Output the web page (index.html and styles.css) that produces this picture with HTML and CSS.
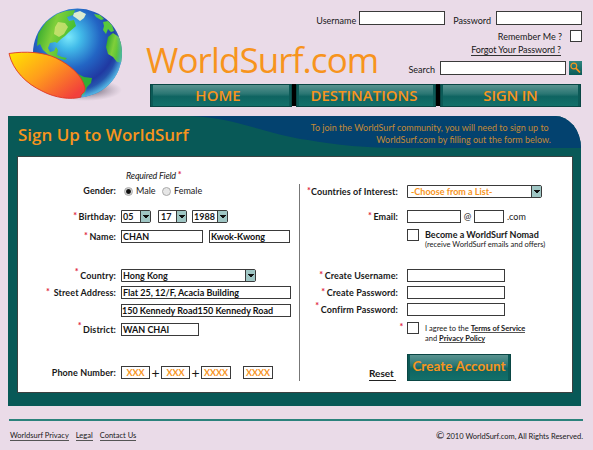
FILE: index.html
```html
<!DOCTYPE html>
<html lang="en">
<head>
<meta charset="utf-8">
<title>WorldSurf.com</title>
<link rel="stylesheet" href="styles.css">
</head>
<body>
<header class="header">
  <svg class="globe" viewBox="0 0 142 108" width="142" height="108" aria-hidden="true">
    <defs>
      <radialGradient id="sea" cx="0.4" cy="0.32" r="0.68">
        <stop offset="0" stop-color="#7be9fb"/><stop offset="0.2" stop-color="#42bbe9"/>
        <stop offset="0.52" stop-color="#2365c4"/><stop offset="0.8" stop-color="#2039a2"/>
        <stop offset="1" stop-color="#2b6fb8"/>
      </radialGradient>
      <radialGradient id="shade"><stop offset="0" stop-color="#3d3445" stop-opacity=".9"/><stop offset="1" stop-color="#8d8294" stop-opacity="0"/></radialGradient>
      <radialGradient id="rim" cx="0.46" cy="0.44" r="0.56">
        <stop offset="0.86" stop-color="#4aa6dc" stop-opacity="0"/><stop offset="1" stop-color="#5cc0ea" stop-opacity=".8"/>
      </radialGradient>
      <linearGradient id="land" x1="0" y1="0" x2="1" y2="0.4">
        <stop offset="0" stop-color="#189b2a"/><stop offset="0.5" stop-color="#7fcf3a"/><stop offset="1" stop-color="#3fbd33"/>
      </linearGradient>
      <linearGradient id="board" x1="0" y1="0" x2="1" y2="0.75">
        <stop offset="0" stop-color="#ffe600"/><stop offset="0.5" stop-color="#ff9d1c"/><stop offset="1" stop-color="#f2403c"/>
      </linearGradient>
      <clipPath id="ball"><circle cx="77.5" cy="53" r="44.5"/></clipPath>
    </defs>
    <ellipse cx="86" cy="90" rx="36" ry="11" fill="url(#shade)"/>
    <circle cx="77.5" cy="53" r="44.5" fill="url(#sea)"/>
    <g clip-path="url(#ball)">
      <path d="M37 46L38 34L46 22L57 14L66 11L75 10L73 15L67 17L69 21L74 20L76 26L69 32L65 36L61 39L57 43L55 42L50 43L48 48L50 52L54 51L56 47L58 50L57 55L62 57L67 58L65 60L58 58L50 56L43 50L40 44Z" fill="url(#land)"/>
      <path d="M58 22l7 1 3 4-4 7-5 3-5-3 1-7z" fill="#d9e579" opacity=".75"/>
      <path d="M74 13l6-2 6 3-2 4-4 3-4-3-3-2z" fill="#dcecd0"/>
      <path d="M94 14l6 1 4 4-3 1-5-3zM103 22l5-1 4 4 2 6-3 1-3-3-2 5-3-4 1-4z" fill="#58c93c"/>
      <path d="M108 37L113 33L119 37L124 46L124 63L117 62L113 57L108 54L106 47Z" fill="url(#land)"/>
      <path d="M61 65L69 67L76 73L84 77L92 78L91 83L87 87L84 96L76 94Z" fill="#31ae36"/>
    </g>
    <circle cx="77.5" cy="53" r="44.5" fill="url(#rim)"/>
    <path d="M9 53.5C25 51 44 52 56 58C70 65 82 75 85 88Q85 92 83 93Q80 95 81 97C71 100 55 98 42 91C27 84 13 71 9 53.5Z" fill="url(#board)" stroke="#df3828" stroke-width="0.9"/>
  </svg>
  <div class="header-main">
    <div class="header-top">
      <h1 class="logo">WorldSurf.com</h1>
      <form class="login">
        <div class="login-row login-fields">
          <label>Username</label><span class="field user"></span>
          <label class="pass-label">Password</label><span class="field pass"></span>
        </div>
        <div class="login-row remember"><label>Remember Me ?</label><span class="check"></span></div>
        <div class="login-row forgot"><a>Forgot Your Password ?</a></div>
        <div class="login-row search">
          <label>Search</label><span class="field query"></span>
          <span class="search-button"><svg viewBox="0 0 13 14" width="13" height="14"><circle cx="4.8" cy="5" r="2.9" fill="none" stroke="#f7941d" stroke-width="1.2"/><path d="M7 7.3l4 4.2" stroke="#f7941d" stroke-width="1.8"/></svg></span>
        </div>
      </form>
    </div>
    <nav class="nav"><a class="nav-item">HOME</a><a class="nav-item">DESTINATIONS</a><a class="nav-item">SIGN IN</a></nav>
  </div>
</header>

<main class="panel">
  <svg class="wave" viewBox="0 0 392 33" width="392" height="33" aria-hidden="true"><path d="M0 0C50 2 75 18 119 24C145 29 180 32 212 32H392V0Z" fill="#03426f"/></svg>
  <div class="panel-head">
    <h2>Sign Up to WorldSurf</h2>
    <p>To join the WorldSurf community, you will need to sign up to&nbsp;<br>WorldSurf.com by filling out the form below.</p>
  </div>
  <form class="sheet">
    <div class="column personal">
      <div class="required">Required Field <b class="star">*</b></div>
      <div class="row gender"><label>Gender:</label><span class="radio on"></span><span class="male">Male</span><span class="radio"></span><span>Female</span></div>
      <div class="row birthday"><label><b class="star">*</b>Birthday:</label><span class="select day">05</span><span class="select month">17</span><span class="select year">1988</span></div>
      <div class="row name"><label><b class="star">*</b>Name:</label><span class="field first">CHAN</span><span class="field last">Kwok-Kwong</span></div>
      <div class="row country"><label><b class="star high">*</b>Country:</label><span class="select nation">Hong Kong</span></div>
      <div class="row street"><label><b class="star">*</b> Street Address:</label><span class="field line">Flat 25, 12/F, Acacia Building</span></div>
      <div class="row street-two"><label></label><span class="field line tight">150 Kennedy Road150 Kennedy Road</span></div>
      <div class="row district"><label><b class="star high">*</b>District:</label><span class="field area">WAN CHAI</span></div>
      <div class="row phone"><label>Phone Number:</label><span class="field digits">XXX</span><span class="plus">+</span><span class="field digits">XXX</span><span class="plus">+</span><span class="field digits four">XXXX</span><span class="field digits four extra">XXXX</span></div>
    </div>
    <div class="column account">
      <div class="row interest"><label><b class="star close">*</b>Countries of Interest:</label><span class="select list">-Choose from a List-</span></div>
      <div class="row email"><label><b class="star">*</b>Email:</label><span class="field mailbox"></span><span class="at">@</span><span class="field domain"></span><span>.com</span></div>
      <div class="row nomad"><label></label><span class="check"></span><div class="note"><strong>Become a WorldSurf Nomad</strong><small>(receive WorldSurf emails and offers)</small></div></div>
      <div class="row username"><label><b class="star">*</b>Create Username:</label><span class="field wide"></span></div>
      <div class="row password"><label><b class="star">*</b>Create Password:</label><span class="field wide"></span></div>
      <div class="row confirm"><label><b class="star high">*</b>Confirm Password:</label><span class="field wide"></span></div>
      <div class="row agree"><label><b class="star">*</b></label><span class="check"></span><div class="note terms">I agree to the <a>Terms of Service</a><br>and <a>Privacy Policy</a></div></div>
      <div class="actions"><a class="reset">Reset</a><button type="button" class="create">Create Account</button></div>
    </div>
  </form>
</main>

<footer class="footer">
  <a>Worldsurf Privacy</a><a>Legal</a><a>Contact Us</a>
  <span class="copyright"><span class="mark">©</span> 2010 WorldSurf.com, All Rights Reserved.</span>
</footer>
</body>
</html>
```
FILE: styles.css
```css
* { box-sizing: border-box; }

body {
  width: 593px;
  height: 450px;
  margin: 0;
  overflow: hidden;
  background: #eadbe8;
  color: #181818;
  font: 9px/12px Lato, "Open Sans", sans-serif;
  white-space: nowrap;
}

h1, h2, p { margin: 0; }

/* Header */
.header { display: flex; height: 116px; padding-right: 11px; }
.globe { flex: none; }
.header-main { flex: 1; padding-left: 4px; }
.header-top { display: flex; justify-content: space-between; height: 84px; }
.logo {
  width: 0;
  padding-top: 36px;
  color: #f7941d;
  font: 400 35px/48px "Open Sans", sans-serif;
  letter-spacing: -0.9px;
}
.login { padding-top: 11px; }
.login-row { display: flex; justify-content: flex-end; align-items: center; }
.login-fields { height: 14px; }
.login-fields label { padding-top: 5px; }
.field {
  display: block;
  height: 13px;
  border: 1px solid #3a3a3a;
  background: #fff;
  line-height: 12px;
  padding-left: 1px;
  font-weight: 700;
  color: #111;
}
.login-fields .field, .query { height: 14px; }
.user { width: 86px; margin-left: 3px; }
.pass-label { margin-left: 8px; }
.pass { width: 86px; margin-left: 5px; }
.check { flex: none; width: 12px; height: 12px; border: 1px solid #3a3a3a; background: #fff; }
.remember { height: 12px; margin-top: 5px; }
.remember label { padding-top: 1px; margin-right: 8px; }
.forgot { height: 13px; padding-right: 21px; margin-top: 1px; }
.forgot a { height: 13px; line-height: 13px; border-bottom: 1px solid #333; letter-spacing: -0.1px; }
.search { height: 14px; margin-top: 5px; }
.search label { padding-top: 4px; }
.query { width: 126px; margin: 0 3px 0 5px; }
.search-button { width: 13px; height: 14px; background: linear-gradient(#2f8580, #0b5b58); }
.search-button svg { display: block; }

.nav {
  display: grid;
  grid-template-columns: 142px 140px 141px;
  gap: 4px;
  width: 431px;
  height: 22px;
  margin-left: 4px;
  background: #000;
}
.nav-item, .create {
  background: linear-gradient(#5a9390, #2a7673 42%, #0f6461 55%, #13706a);
  border: 1px solid #0a4644;
  box-shadow: inset 2px 0 #0c5a57, inset -2px 0 #0c5a57;
  color: #f7941d;
}
.nav-item { text-align: center; font: 600 15px/21px "Open Sans", sans-serif; padding-right: 6px; }
.nav-item:nth-child(2) { padding-right: 4px; }
.nav-item:nth-child(3) { padding: 0; letter-spacing: -0.2px; }

/* Panel */
.panel {
  position: relative;
  width: 573px;
  height: 290px;
  margin-left: 8px;
  padding: 0 8px 0 9px;
  border-top-right-radius: 26px 32px;
  background: #085957;
  overflow: hidden;
}
.wave { position: absolute; top: 0; right: 0; }
.panel-head { position: relative; display: flex; justify-content: space-between; height: 40px; }
.panel-head h2 { padding-left: 1px; color: #f7941d; font: 600 17px/37px "Open Sans", sans-serif; }
.panel-head p { padding: 6px 22px 0 0; color: #c48a35; text-align: right; }
.sheet {
  position: relative;
  display: flex;
  width: 556px;
  height: 237px;
  border: 1px solid #3a4141;
  background: #fff;
}

/* Form */
.row { display: flex; align-items: center; height: 13px; }
.row label { flex: none; text-align: right; font-weight: 700; letter-spacing: 0.1px; }
.personal { width: 281px; }
.personal label { width: 98px; margin-right: 5px; }
.account { position: relative; flex: 1; height: 197px; margin-top: 27px; border-left: 1px solid #777; }
.account label { width: 98px; margin-right: 9px; }
.star { position: relative; top: -1px; margin-right: 1.5px; color: #e0243c; font-weight: 700; }
.star.high { top: -4px; }
.star.close { margin-right: 0; }
.required { padding: 13px 0 0 108px; height: 28px; font-style: italic; letter-spacing: -0.2px; }
.required .star { font-style: normal; }
.gender { height: 12px; }
.radio { width: 9px; height: 9px; margin: 0 3px; border: 1px solid #aaa; border-radius: 50%; background: #e6e6e6; }
.radio.on { background: radial-gradient(#111 38%, #d5d5d5 60%); }
.male { width: 23px; }

.select {
  display: flex;
  justify-content: space-between;
  height: 13px;
  border: 1px solid #3a3a3a;
  border-radius: 0 2px 2px 0;
  padding-left: 1px;
  line-height: 12px;
  font-weight: 700;
}
.select::after {
  content: "";
  width: 9px;
  border-left: 1px solid #3a3a3a;
  background:
    linear-gradient(#111, #111) center 4px / 6px 1px no-repeat,
    linear-gradient(#111, #111) center 5px / 4px 1px no-repeat,
    linear-gradient(#111, #111) center 6px / 2px 1px no-repeat,
    #9fc6c4;
}
.birthday { margin-top: 13px; }
.day { width: 30px; }
.month { width: 29px; margin-left: 7px; padding-left: 2px; }
.year { width: 36px; margin-left: 5px; }
.name { margin-top: 7px; }
.first { width: 82px; }
.last { width: 81px; margin-left: 6px; }
.country { margin-top: 26px; }
.nation { width: 135px; }
.street { margin-top: 4px; }
.line { width: 170px; }
.line.tight { padding-left: 0; }
.street-two { margin-top: 5px; }
.district { margin-top: 6px; }
.area { width: 78px; }
.phone { margin-top: 30px; }
.digits { width: 29px; padding: 0; text-align: center; color: #f7941d; }
.digits.four { width: 30px; }
.digits.extra { margin-left: 12px; }
.plus { width: 11px; text-align: center; font-size: 14px; }

.interest { margin-top: 1px; }
.list { width: 135px; padding-left: 3px; color: #f7941d; }
.email { margin-top: 12px; }
.mailbox { width: 54px; }
.at { width: 13px; text-align: center; }
.domain { width: 30px; margin-right: 3px; }
.nomad { margin-top: 6px; align-items: flex-start; }
.note { margin-left: 6px; }
.note strong, .note small { display: block; }
.note small { font-size: 7.5px; line-height: 8px; }
.username { margin-top: 27px; }
.wide { width: 98px; }
.password { margin-top: 4px; }
.confirm { margin-top: 4px; }
.agree { margin-top: 6px; align-items: flex-start; }
.agree label { width: 105px; margin-right: 2px; }
.terms { font-size: 7.5px; line-height: 10px; padding-top: 2px; }
.terms a { display: inline-block; height: 9px; line-height: 10px; border-bottom: 1px solid #555; font-weight: 700; vertical-align: top; }
.actions { display: flex; height: 27px; margin-top: 19px; padding-left: 69px; }
.reset { align-self: flex-end; width: 27px; height: 14px; margin-right: 11px; border-bottom: 1px solid #222; font-size: 10px; font-weight: 700; }
.create { width: 104px; height: 27px; padding: 0 0 3px; font: 700 13.6px/20px Lato, sans-serif; white-space: nowrap; }

/* Footer */
.footer {
  display: flex;
  gap: 7px;
  width: 574px;
  margin: 13px 0 0 9px;
  padding: 9px 0 0 1px;
  border-top: 2px solid #2b827c;
  font-size: 7.5px;
  line-height: 11px;
}
.footer a { height: 11px; border-bottom: 1px solid #555; }
.copyright { margin-left: auto; }
.mark { font-size: 10px; }
```
